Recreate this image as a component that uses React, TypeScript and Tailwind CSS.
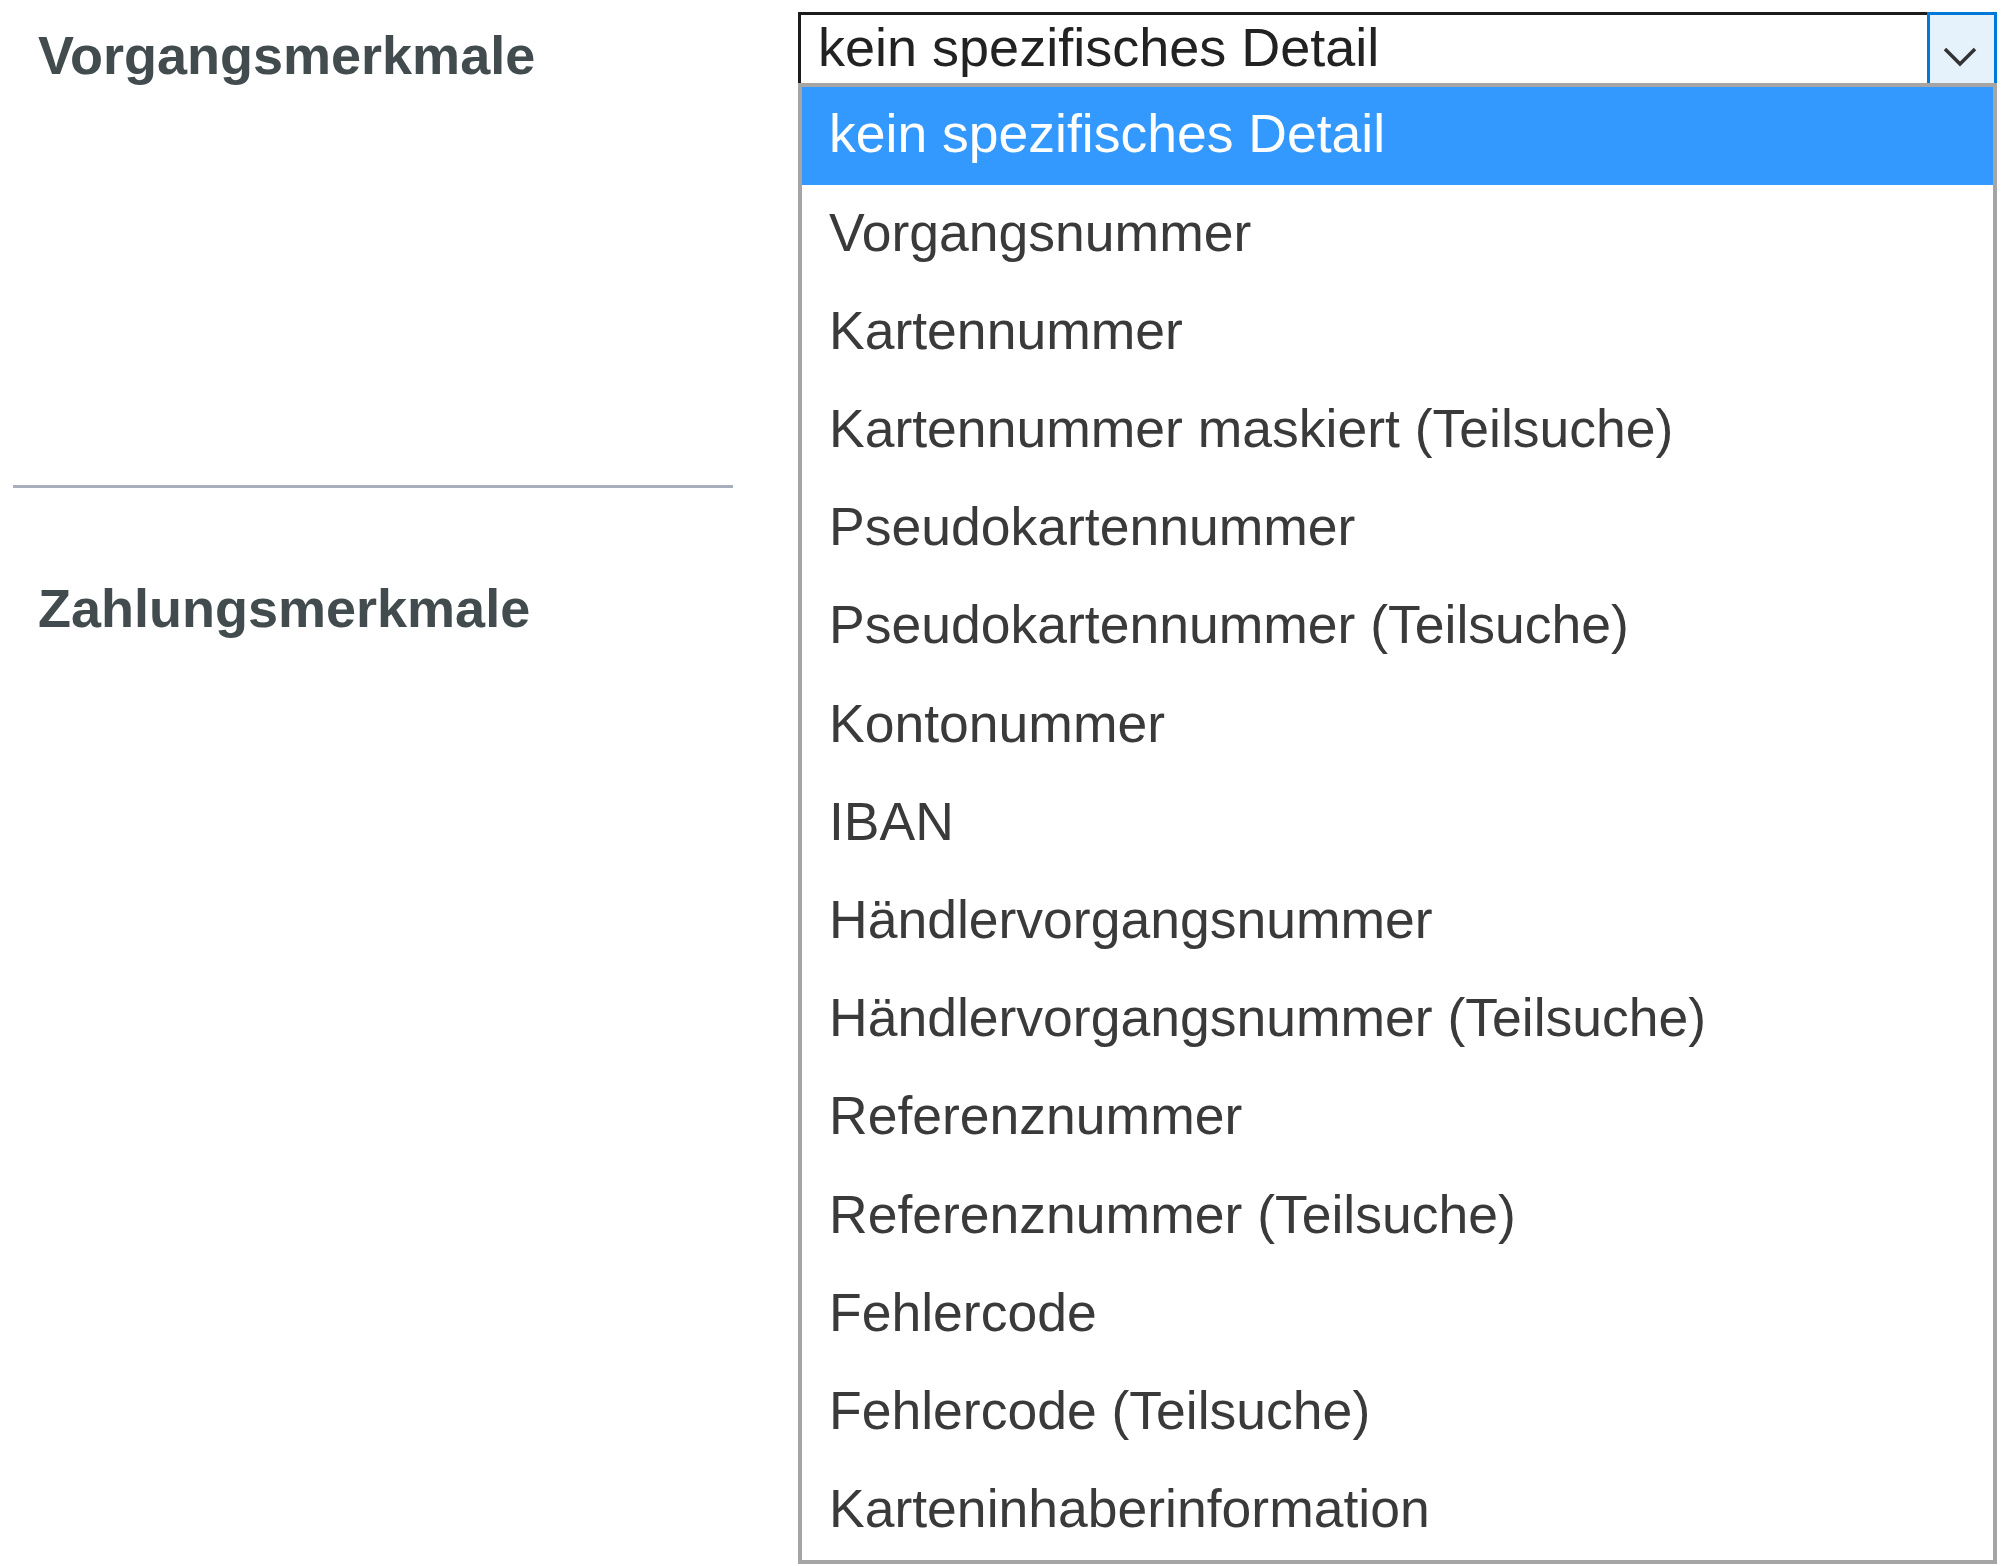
import React from "react";

// Options of the "Vorgangsmerkmale" dropdown, first one is selected
const DETAIL_OPTIONS = [
  "kein spezifisches Detail",
  "Vorgangsnummer",
  "Kartennummer",
  "Kartennummer maskiert (Teilsuche)",
  "Pseudokartennummer",
  "Pseudokartennummer (Teilsuche)",
  "Kontonummer",
  "IBAN",
  "Händlervorgangsnummer",
  "Händlervorgangsnummer (Teilsuche)",
  "Referenznummer",
  "Referenznummer (Teilsuche)",
  "Fehlercode",
  "Fehlercode (Teilsuche)",
  "Karteninhaberinformation",
];

const SectionLabel: React.FC<{ children: React.ReactNode; className?: string }> = ({
  children,
  className = "",
}) => (
  <div
    className={`pl-[38px] text-[54px] leading-[54px] font-bold text-[#424b4d] ${className}`}
  >
    {children}
  </div>
);

const DetailSelect: React.FC<{ selected: number }> = ({ selected }) => {
  return (
    <div className="w-[1199px]">
      {/* closed select box */}
      <div className="flex h-[71px]">
        <div className="flex flex-1 items-center border-t-[3px] border-l-[3px] border-[#1c1c1c] bg-white pl-[17px] pb-[4px] text-[54px] text-[#222]">
          {DETAIL_OPTIONS[selected]}
        </div>
        <div className="w-[70px] border-t-[3px] border-x-[3px] border-[#0078d7] bg-[#e5f1fb]">
          <svg width="64" height="68" viewBox="0 0 64 68">
            <polyline
              points="15,34 30,49 45,34"
              fill="none"
              stroke="#333"
              strokeWidth="3.5"
            />
          </svg>
        </div>
      </div>

      {/* open list */}
      <ul className="border-4 border-[#a5a5a5] bg-white">
        {DETAIL_OPTIONS.map((opt, i) => (
          <li
            key={opt}
            className={`flex h-[98.2px] items-center pl-[27px] pb-[3px] text-[53.5px] whitespace-nowrap ${
              i === selected ? "bg-[#3399ff] text-white" : "text-[#3a3a3a]"
            }`}
          >
            {opt}
          </li>
        ))}
      </ul>
    </div>
  );
};

export default function App() {
  return (
    <div
      className="flex min-h-[1566px] w-[2005px] bg-white"
      style={{ fontFamily: '"Liberation Sans", Arial, sans-serif' }}
    >
      <div className="w-[798px] shrink-0 pt-[28px]">
        <SectionLabel>Vorgangsmerkmale</SectionLabel>
        <div className="mt-[403px] ml-[13px] h-[3px] w-[720px] bg-[#a7afbc]" />
        <SectionLabel className="mt-[93px]">Zahlungsmerkmale</SectionLabel>
      </div>
      <div className="pt-[12px]">
        <DetailSelect selected={0} />
      </div>
    </div>
  );
}
